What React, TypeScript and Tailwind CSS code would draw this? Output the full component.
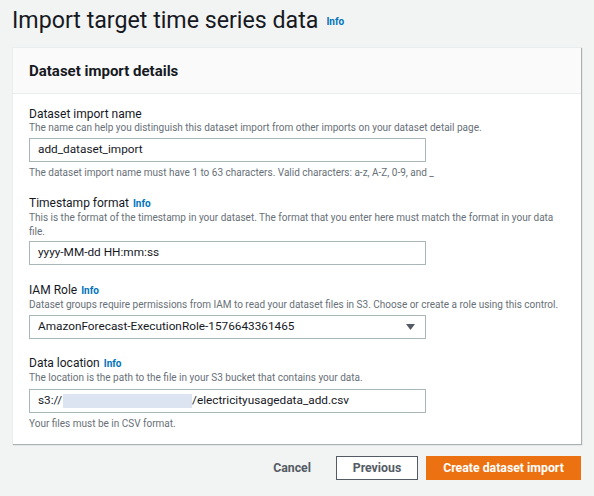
import type { ReactNode } from 'react';

// ── Small pieces ──────────────────────────────────────────────────────────────

function InfoLink(): JSX.Element {
  return <span className="ml-[4px] text-[10px] font-bold text-[#0073bb]">Info</span>;
}

interface FieldProps {
  label: string;
  info?: boolean;
  description: ReactNode;
  hint?: string;
  className?: string;
  controlClass?: string;
  children: ReactNode;
}

function Field({ label, info, description, hint, className, controlClass, children }: FieldProps): JSX.Element {
  return (
    <div className={className}>
      <div className="text-[12px] leading-[14px] text-[#16191f]">
        {label}
        {info && <InfoLink />}
      </div>
      <div className="whitespace-nowrap text-[10px] leading-[14px] text-[#687078]">{description}</div>
      <div className={controlClass}>{children}</div>
      {hint && <div className="mt-[4px] text-[10px] leading-[14px] text-[#687078]">{hint}</div>}
    </div>
  );
}

function TextBox({ children }: { children: ReactNode }): JSX.Element {
  return (
    <div className="flex h-[24px] w-[397px] items-center border border-[#aab7b8] bg-white px-[8px] text-[11.8px] text-[#16191f]">
      {children}
    </div>
  );
}

// ── App ───────────────────────────────────────────────────────────────────────

export default function App(): JSX.Element {
  return (
    <div className="h-[496px] w-[594px] bg-[#f2f3f3] px-[12px] pt-[4px] font-['Roboto',sans-serif]">
      <h1 className="flex h-[32px] items-center text-[23.2px] leading-[32px] text-[#16191f]">
        Import target time series data
        <span className="ml-[8px] mt-[4px] text-[10px] font-bold leading-none text-[#0073bb]">Info</span>
      </h1>

      <div className="mt-[11px] w-[569px] border-l border-t border-[#eaeded] bg-white shadow-[1px_1px_1px_rgba(0,28,36,0.3)]">
        <div className="flex h-[46px] items-center border-b border-[#eaeded] bg-[#fafafa] px-[16px] pt-[2px] text-[15px] font-bold text-[#16191f]">
          Dataset import details
        </div>

        <div className="flex flex-col px-[16px] pb-[13px] pt-[13px]">
          <Field
            label="Dataset import name"
            description="The name can help you distinguish this dataset import from other imports on your dataset detail page."
            hint="The dataset import name must have 1 to 63 characters. Valid characters: a-z, A-Z, 0-9, and _"
            controlClass="mt-[3px]"
          >
            <TextBox>add_dataset_import</TextBox>
          </Field>

          <Field
            className="mt-[16px]"
            controlClass="mt-[2px]"
            label="Timestamp format"
            info
            description={
              <>
                This is the format of the timestamp in your dataset. The format that you enter here must match the format in your data
                <br />
                file.
              </>
            }
          >
            <TextBox>yyyy-MM-dd HH:mm:ss</TextBox>
          </Field>

          <Field
            className="mt-[18px]"
            controlClass="mt-[3px]"
            label="IAM Role"
            info
            description="Dataset groups require permissions from IAM to read your dataset files in S3. Choose or create a role using this control."
          >
            <TextBox>
              <span className="flex-1">AmazonForecast-ExecutionRole-1576643361465</span>
              <svg width="9" height="6" viewBox="0 0 9 6" className="mr-[2px]">
                <path d="M0 0h9L4.5 6z" fill="#545b64" />
              </svg>
            </TextBox>
          </Field>

          <Field
            className="mt-[17px]"
            controlClass="mt-[4px]"
            label="Data location"
            info
            description="The location is the path to the file in your S3 bucket that contains your data."
            hint="Your files must be in CSV format."
          >
            <TextBox>
              s3://
              <span className="ml-[1px] inline-block h-[14px] w-[129px] bg-[#dce4f2]" />
              /electricityusagedata_add.csv
            </TextBox>
          </Field>
        </div>
      </div>

      <div className="mt-[12px] flex w-[569px] items-center justify-end text-[12.3px] font-bold">
        <span className="mr-[25px] text-[#545b64]">Cancel</span>
        <span className="flex h-[24px] w-[82px] items-center justify-center border border-[#545b64] bg-white text-[#545b64]">
          Previous
        </span>
        <span className="ml-[8px] flex h-[24px] w-[155px] items-center justify-center bg-[#ec7211] text-white">
          Create dataset import
        </span>
      </div>
    </div>
  );
}
